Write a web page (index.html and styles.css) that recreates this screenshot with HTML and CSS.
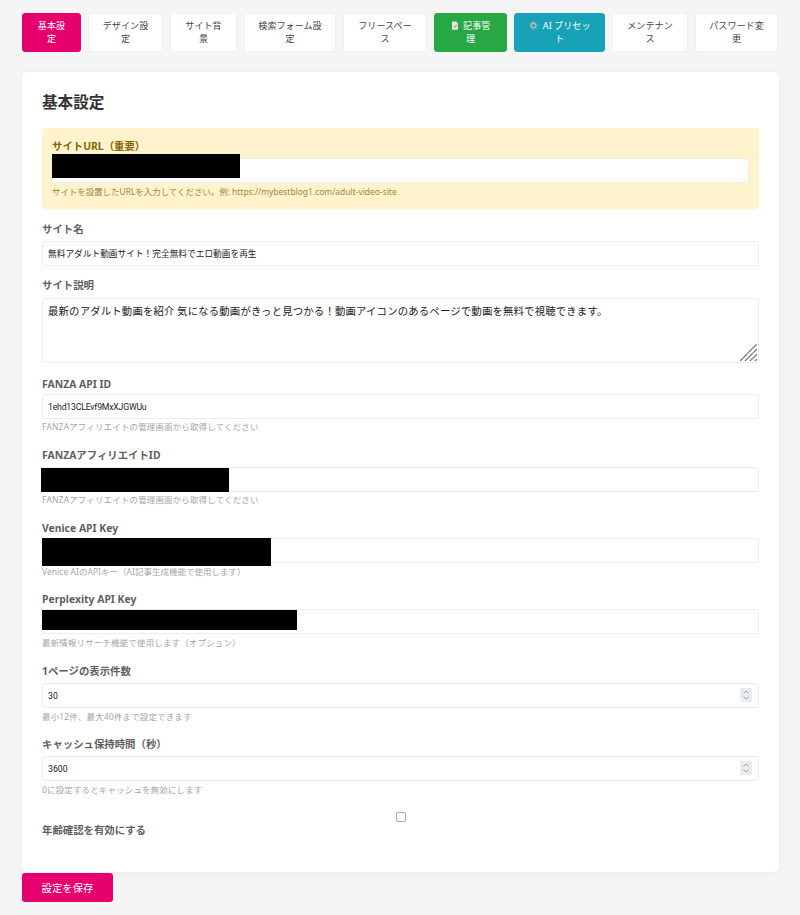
FILE: index.html
```html
<!DOCTYPE html>
<html lang="ja">
<head>
    <meta charset="UTF-8">
    <meta name="viewport" content="width=device-width, initial-scale=1.0">
    <title>基本設定</title>
    <link rel="stylesheet" href="styles.css">
</head>
<body>
    <nav class="tabs">
        <a href="#" class="tab active">基本設定</a>
        <a href="#" class="tab">デザイン設定</a>
        <a href="#" class="tab">サイト背景</a>
        <a href="#" class="tab">検索フォーム設定</a>
        <a href="#" class="tab">フリースペース</a>
        <a href="#" class="tab green">
            <svg class="tab-icon" viewBox="0 0 10 12"><path d="M1 .5h5.5L9 3v8.500H1z" fill="#e6e6e6"/><path d="M6.500.5V3H9z" fill="#bdbdbd"/><path d="M3 9.500l.5-2L7 4.500l1.300 1.300-3.500 3z" fill="#d98a6a"/></svg>
            記事管理
        </a>
        <a href="#" class="tab teal">
            <svg class="tab-icon gear" viewBox="0 0 12 12"><circle cx="6" cy="6" r="3" fill="none" stroke="#b9b4b8" stroke-width="2"/><path d="M6 .8v2M6 9.200v2M.8 6h2M9.200 6h2M2.300 2.300l1.400 1.400M8.300 8.300l1.400 1.400M2.300 9.700l1.400-1.400M8.300 3.700l1.400-1.400" stroke="#b9b4b8" stroke-width="1.500"/></svg>
            AI プリセット
        </a>
        <a href="#" class="tab">メンテナンス</a>
        <a href="#" class="tab">パスワード変更</a>
    </nav>

    <form class="card">
        <h2>基本設定</h2>

        <div class="url-box">
            <label>サイトURL（重要）</label>
            <div class="input-wrap">
                <input type="text">
                <span class="redact redact-url"></span>
            </div>
            <small>サイトを設置したURLを入力してください。例: https://mybestblog1.com/adult-video-site</small>
        </div>

        <div class="field name-field">
            <label>サイト名</label>
            <input type="text" value="無料アダルト動画サイト！完全無料でエロ動画を再生">
        </div>

        <div class="field desc-field">
            <label>サイト説明</label>
            <div class="input-wrap">
                <textarea>最新のアダルト動画を紹介 気になる動画がきっと見つかる！動画アイコンのあるページで動画を無料で視聴できます。</textarea>
                <svg class="resize-grip" viewBox="0 0 17 17"><path d="M0 17L17 0M5 17L17 5M10 17l7-7M15 17l2-2" stroke="#666" stroke-width="1.400" stroke-dasharray="1.400 .4"/></svg>
            </div>
        </div>

        <div class="field">
            <label class="label-en">FANZA API ID</label>
            <input class="input-id" type="text" value="1ehd13CLEvf9MxXJGWUu">
            <small>FANZAアフィリエイトの管理画面から取得してください</small>
        </div>

        <div class="field aff-field">
            <label>FANZAアフィリエイトID</label>
            <div class="input-wrap">
                <input type="text">
                <span class="redact redact-aff"></span>
            </div>
            <small>FANZAアフィリエイトの管理画面から取得してください</small>
        </div>

        <div class="field">
            <label class="label-en">Venice API Key</label>
            <div class="input-wrap">
                <input type="text">
                <span class="redact redact-venice"></span>
            </div>
            <small class="help-low help-tight">Venice AIのAPIキー（AI記事生成機能で使用します）</small>
        </div>

        <div class="field">
            <label class="label-en">Perplexity API Key</label>
            <div class="input-wrap">
                <input type="text">
                <span class="redact redact-perp"></span>
            </div>
            <small class="help-low">最新情報リサーチ機能で使用します（オプション）</small>
        </div>

        <div class="field count-field">
            <label>1ページの表示件数</label>
            <div class="input-wrap">
                <input type="number" value="30">
                <svg class="spinner" viewBox="0 0 12 14"><rect width="12" height="14" fill="#e9ecef"/><path d="M3.500 5.500L6 3l2.500 2.500M3.500 8.500L6 11l2.500-2.500" fill="none" stroke="#9aa0a6" stroke-width="1"/></svg>
            </div>
            <small class="help-low">最小12件、最大40件まで設定できます</small>
        </div>

        <div class="field">
            <label>キャッシュ保持時間（秒）</label>
            <div class="input-wrap">
                <input type="number" value="3600">
                <svg class="spinner" viewBox="0 0 12 14"><rect width="12" height="14" fill="#e9ecef"/><path d="M3.500 5.500L6 3l2.500 2.500M3.500 8.500L6 11l2.500-2.500" fill="none" stroke="#9aa0a6" stroke-width="1"/></svg>
            </div>
            <small class="help-low">0に設定するとキャッシュを無効にします</small>
        </div>

        <div class="age-field">
            <input type="checkbox">
            <label>年齢確認を有効にする</label>
        </div>
    </form>

    <button class="save" type="button">設定を保存</button>
</body>
</html>
```

FILE: styles.css
```css
* {
    box-sizing: border-box;
}

body {
    margin: 0;
    padding: 13px 21px 0 22px;
    background: #f5f5f5;
    color: #333;
    font-family: "Noto Sans", "Noto Sans CJK JP", sans-serif;
    font-size: 10.4px;
}

.tabs {
    display: grid;
    grid-template-columns: 59px 75px 67px 92px 84px 73px 91px 76px 83px;
    column-gap: 7px;
    height: 39px;
    margin-bottom: 20px;
}

.tab {
    display: block;
    padding: 5px 12px;
    background: #fff;
    border: 1px solid #f0f0f0;
    border-radius: 3px;
    color: #444;
    font-size: 9.1px;
    line-height: 13px;
    text-align: center;
    text-decoration: none;
}

.tab.active {
    background: #e6006e;
    border-color: #e6006e;
    color: #fff;
}

.tab.green {
    background: #28a745;
    border-color: #28a745;
    color: #fff;
}

.tab.teal {
    background: #17a2b8;
    border-color: #17a2b8;
    color: #fff;
}

.tab-icon {
    width: 8px;
    height: 9px;
    margin-right: 2px;
    vertical-align: -1px;
}

.tab-icon.gear {
    width: 9px;
    margin-right: 3px;
}

.card {
    height: 800px;
    padding: 20px;
    background: #fff;
    border-radius: 5px;
    box-shadow: 0 1px 6px rgba(0, 0, 0, 0.06);
}

h2 {
    margin: 0 0 15px;
    font-size: 15.6px;
    line-height: 21px;
    font-weight: 700;
    color: #333;
}

.url-box {
    height: 81px;
    margin-bottom: 14px;
    padding: 12px 10px 10px;
    background: #fff3cd;
    border-radius: 3px;
}

.url-box label {
    color: #856404;
}

.url-box small {
    margin-top: 3px;
    color: #a08540;
    letter-spacing: 0;
}

label {
    display: block;
    height: 13px;
    margin-bottom: 5px;
    line-height: 13px;
    font-weight: 700;
    color: #5f5f5f;
}

.label-en {
    height: 10px;
    line-height: 10px;
}

input[type="text"],
input[type="number"],
textarea {
    display: block;
    width: 100%;
    height: 25px;
    padding: 0 5px;
    background: #fff;
    border: 1px solid #ececec;
    border-radius: 3px;
    color: #222;
    font-family: Roboto, "Noto Sans CJK JP", sans-serif;
    font-size: 8.7px;
    outline: none;
    appearance: textfield;
}

input.input-id {
    letter-spacing: -0.2px;
}

textarea {
    height: 65px;
    padding: 5px;
    font-family: "Noto Sans CJK JP", sans-serif;
    font-size: 10.4px;
    line-height: 14px;
    letter-spacing: 0.16px;
    resize: none;
}

.resize-grip {
    position: absolute;
    right: 2px;
    bottom: 2px;
    width: 17px;
    height: 17px;
}

.spinner {
    position: absolute;
    right: 7px;
    top: 5px;
    width: 12px;
    height: 14px;
}

small {
    display: block;
    margin-top: 2px;
    height: 12px;
    line-height: 12px;
    font-size: 8.45px;
    letter-spacing: 0.2px;
    color: #a5a5a5;
}

small.help-low {
    margin-top: 3px;
}

small.help-tight {
    letter-spacing: 0.07px;
}

.field {
    margin-bottom: 16px;
}

.name-field {
    margin-bottom: 13px;
}

.desc-field label {
    margin-bottom: 6px;
}

.aff-field {
    margin-bottom: 17px;
}

.count-field {
    margin-bottom: 15px;
}

.input-wrap {
    position: relative;
}

.redact {
    position: absolute;
    background: #000;
}

.redact-url {
    left: 0;
    top: -4px;
    width: 188px;
    height: 24px;
}

.redact-aff {
    left: -1px;
    top: 1px;
    width: 188px;
    height: 24px;
}

.redact-venice {
    left: 0;
    top: 0;
    width: 229px;
    height: 28px;
}

.redact-perp {
    left: 0;
    top: 1px;
    width: 255px;
    height: 20px;
}

.age-field input {
    display: block;
    width: 10px;
    height: 10px;
    margin: 0 auto 2px;
    background: #fff;
    border: 1px solid #aaa;
    border-radius: 2px;
    appearance: none;
}

.age-field label {
    margin-bottom: 0;
}

.save {
    display: block;
    width: 91px;
    height: 29px;
    margin-top: 1px;
    background: #e6006e;
    border: 0;
    border-radius: 3px;
    color: #fff;
    font-family: "Noto Sans", "Noto Sans CJK JP", sans-serif;
    font-size: 10.4px;
}
```
